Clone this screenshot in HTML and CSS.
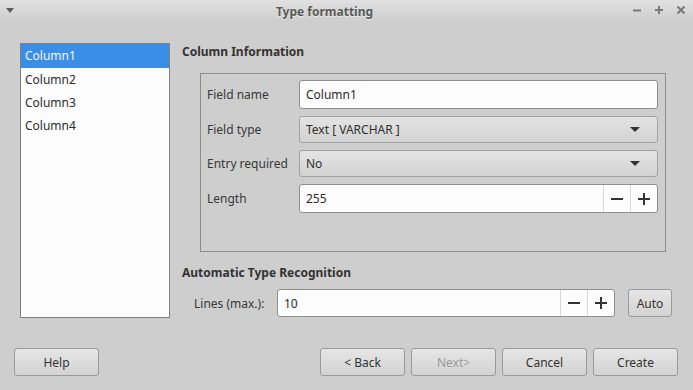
FILE: index.html
```html
<!doctype html>
<html lang="en">
<head>
  <meta charset="utf-8">
  <title>Type formatting</title>
  <link rel="stylesheet" href="styles.css">
</head>
<body>
  <div class="window">
    <div class="titlebar">
      <span class="menu-arrow"></span>
      <span class="title">Type formatting</span>
      <div class="wm-buttons">
        <svg width="10" height="10" viewBox="0 0 10 10"><path d="M1 5.5h8" stroke="#7a7a7a" stroke-width="2"/></svg>
        <svg width="10" height="10" viewBox="0 0 10 10"><path d="M1 5h8M5 1v8" stroke="#7a7a7a" stroke-width="2"/></svg>
        <svg width="10" height="10" viewBox="0 0 10 10"><path d="M1.5 1.5l7 7M8.5 1.5l-7 7" stroke="#7a7a7a" stroke-width="2"/></svg>
      </div>
    </div>

    <div class="main">
      <ul class="column-list">
        <li class="selected">Column1</li>
        <li>Column2</li>
        <li>Column3</li>
        <li>Column4</li>
      </ul>

      <div class="panel">
        <h2>Column Information</h2>
        <div class="frame">
          <label>Field name</label>
          <div class="field">Column1</div>

          <label>Field type</label>
          <div class="select">Text [ VARCHAR ]<span class="caret"></span></div>

          <label>Entry required</label>
          <div class="select">No<span class="caret"></span></div>

          <label>Length</label>
          <div class="field spin">
            <span class="spin-value">255</span>
            <span class="spin-btn"><svg width="12" height="12" viewBox="0 0 12 12"><path d="M0 6h12" stroke="#333" stroke-width="2"/></svg></span>
            <span class="spin-btn"><svg width="12" height="12" viewBox="0 0 12 12"><path d="M0 6h12M6 0v12" stroke="#333" stroke-width="2"/></svg></span>
          </div>
        </div>

        <h2 class="second">Automatic Type Recognition</h2>
        <div class="lines-row">
          <label>Lines (max.):</label>
          <div class="field spin">
            <span class="spin-value">10</span>
            <span class="spin-btn"><svg width="12" height="12" viewBox="0 0 12 12"><path d="M0 6h12" stroke="#333" stroke-width="2"/></svg></span>
            <span class="spin-btn"><svg width="12" height="12" viewBox="0 0 12 12"><path d="M0 6h12M6 0v12" stroke="#333" stroke-width="2"/></svg></span>
          </div>
          <button class="btn auto-btn">Auto</button>
        </div>
      </div>
    </div>

    <div class="footer">
      <button class="btn">Help</button>
      <div class="nav-buttons">
        <button class="btn">&lt; Back</button>
        <button class="btn" disabled>Next&gt;</button>
        <button class="btn">Cancel</button>
        <button class="btn">Create</button>
      </div>
    </div>
  </div>
</body>
</html>
```

FILE: styles.css
```css
:root {
  --bg: #cecece;
  --text: #383838;
  --border: #8e8e8e;
  --select: #3b8ee6;
}

* {
  margin: 0;
  padding: 0;
  box-sizing: border-box;
}

body {
  font-family: "Noto Sans", "Open Sans", sans-serif;
  font-size: 12px;
  color: var(--text);
  background: var(--bg);
}

.window {
  width: 693px;
  height: 390px;
  display: flex;
  flex-direction: column;
}

.titlebar {
  position: relative;
  height: 22px;
  display: flex;
  align-items: center;
  justify-content: center;
  padding-right: 44px;
  background: linear-gradient(#e1e1e1, #cdcdcd);
}

.menu-arrow {
  position: absolute;
  left: 6px;
  top: 8px;
  border-left: 4px solid transparent;
  border-right: 4px solid transparent;
  border-top: 5px solid #5c5c5c;
}

.title {
  font-weight: bold;
  font-size: 12px;
  color: #5a5a5a;
  text-shadow: 0 1px 0 rgba(255, 255, 255, 0.6);
}

.wm-buttons {
  position: absolute;
  right: 7px;
  top: 5px;
  display: flex;
  gap: 12px;
}

.main {
  display: flex;
  padding: 21px 21px 0 20px;
  gap: 12px;
}

.column-list {
  list-style: none;
  width: 150px;
  height: 275px;
  background: #fcfcfc;
  border: 1px solid #808080;
}

.column-list li {
  height: 23px;
  line-height: 23px;
  padding-left: 4px;
  color: #2c2c2c;
}

.column-list li.selected {
  height: 24px;
  line-height: 24px;
  background: var(--select);
  color: #f2f6fc;
}

.panel {
  flex: 1;
  display: flex;
  flex-direction: column;
}

h2 {
  font-size: 12px;
  font-weight: bold;
  line-height: 18px;
  color: #333;
}

h2.second {
  margin-top: 12px;
}

.frame {
  margin: 12px 6px 0 18px;
  height: 179px;
  border: 1px solid #8c8c8c;
  padding: 6px 7px 0 6px;
  display: grid;
  grid-template-columns: 92px 1fr;
  grid-template-rows: 29px 27px 27px 29px;
  row-gap: 7px;
  align-content: start;
  align-items: center;
}

.field {
  height: 100%;
  background: #fdfdfd;
  border: 1px solid var(--border);
  border-radius: 3px;
  padding-left: 6px;
  display: flex;
  align-items: center;
  color: #2a2a2a;
}

.select {
  height: 100%;
  border: 1px solid #a2a2a2;
  border-radius: 3px;
  background: linear-gradient(#e4e4e4, #d2d2d2);
  padding-left: 6px;
  display: flex;
  align-items: center;
  justify-content: space-between;
  color: #303030;
}

.caret {
  margin-right: 17px;
  border-left: 5px solid transparent;
  border-right: 5px solid transparent;
  border-top: 5px solid #333;
}

.spin {
  padding-left: 0;
}

.spin-value {
  flex: 1;
  padding-left: 6px;
}

.spin-btn {
  width: 27px;
  height: 100%;
  border-left: 1px solid #d8d8d8;
  display: flex;
  align-items: center;
  justify-content: center;
}

.lines-row {
  margin-top: 7px;
  height: 28px;
  display: flex;
  align-items: center;
  padding-left: 12px;
}

.lines-row label {
  flex: none;
  width: 83px;
  white-space: nowrap;
}

.lines-row .field {
  flex: none;
  width: 338px;
}

.btn {
  font-family: inherit;
  font-size: 12px;
  color: #333;
  width: 85px;
  height: 28px;
  border: 1px solid #9a9a9a;
  border-radius: 3px;
  background: linear-gradient(#e6e6e6, #d3d3d3);
}

.btn:disabled {
  color: #9a9a9a;
}

.auto-btn {
  flex: none;
  width: 44px;
  height: 28px;
  margin-left: 13px;
}

.footer {
  display: flex;
  justify-content: space-between;
  padding: 30px 15px 0 14px;
}

.nav-buttons {
  display: flex;
  gap: 6px;
}
```
